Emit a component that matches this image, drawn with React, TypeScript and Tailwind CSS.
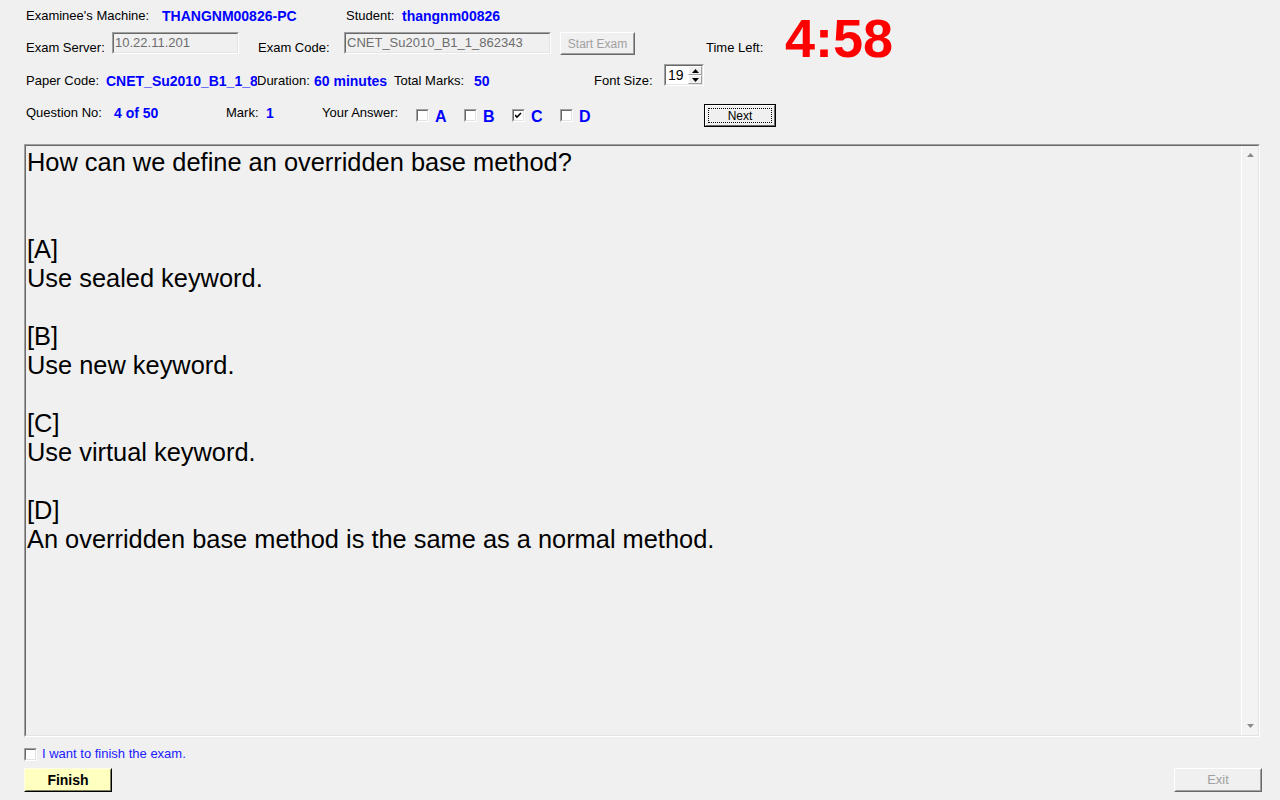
import { ReactNode } from 'react'

function Label({ w, className = '', children }: { w?: string; className?: string; children: ReactNode }) {
  return <span className={`text-[13px] leading-4 text-black whitespace-nowrap ${w ?? ''} ${className}`}>{children}</span>
}

function Value({ w, className = '', children }: { w?: string; className?: string; children: ReactNode }) {
  return (
    <span className={`text-[14px] leading-4 font-bold text-[#0000ff] whitespace-nowrap ${w ?? ''} ${className}`}>
      {children}
    </span>
  )
}

function TextBox({ w, value }: { w: string; value: string }) {
  return (
    <div className={`${w} h-[22px] border border-[#a0a0a0] border-b-white border-r-white`}>
      <div className="h-full border border-[#696969] border-b-[#e3e3e3] border-r-[#e3e3e3] bg-[#f0f0f0] pl-[1px] text-[13px] leading-[17px] text-[#6d6d6d] whitespace-nowrap overflow-hidden">
        {value}
      </div>
    </div>
  )
}

function CheckBox({ checked = false, className = '' }: { checked?: boolean; className?: string }) {
  return (
    <div className={`w-[13px] h-[13px] shrink-0 border border-[#a0a0a0] border-b-white border-r-white ${className}`}>
      <div className="w-full h-full border border-[#696969] border-b-[#e3e3e3] border-r-[#e3e3e3] bg-white flex items-center justify-center">
        {checked && (
          <svg width="7" height="7" viewBox="0 0 7 7">
            <path d="M0 3 L2 5 L6 1" stroke="black" strokeWidth="1.6" fill="none" />
          </svg>
        )}
      </div>
    </div>
  )
}

function Arrow({ up, color = '#606060' }: { up?: boolean; color?: string }) {
  return (
    <svg width="7" height="4" viewBox="0 0 7 4">
      <path d={up ? 'M0 4 L3.5 0 L7 4 Z' : 'M0 0 L3.5 4 L7 0 Z'} fill={color} />
    </svg>
  )
}

function Answer({ letter, checked }: { letter: string; checked?: boolean }) {
  return (
    <div className="flex w-[48px] items-start">
      <CheckBox checked={checked} className="mt-[5px]" />
      <span className="ml-[6px] mt-[4px] text-[16px] leading-[18px] font-bold text-[#0000ff]">{letter}</span>
    </div>
  )
}

const question = `How can we define an overridden base method?


[A]
Use sealed keyword.

[B]
Use new keyword.

[C]
Use virtual keyword.

[D]
An overridden base method is the same as a normal method.`

export default function App() {
  return (
    <div className="w-[1280px] h-[800px] bg-[#f0f0f0] flex flex-col font-['Liberation_Sans',Arial,sans-serif] overflow-hidden">
      {/* top block: machine info + timer */}
      <div className="flex h-[55px] items-start">
        <div className="w-[706px] flex flex-col">
          <div className="flex h-4 mt-2 pl-[26px]">
            <Label w="w-[136px]">Examinee's Machine:</Label>
            <Value w="w-[184px]">THANGNM00826-PC</Value>
            <Label w="w-[56px]">Student:</Label>
            <Value>thangnm00826</Value>
          </div>
          <div className="flex h-[23px] mt-2 pl-[26px] items-start">
            <Label w="w-[86px]" className="mt-[8px]">Exam Server:</Label>
            <TextBox w="w-[127px]" value="10.22.11.201" />
            <Label w="w-[86px]" className="mt-[8px] ml-[19px]">Exam Code:</Label>
            <TextBox w="w-[207px]" value="CNET_Su2010_B1_1_862343" />
            <div className="ml-[9px] w-[75px] h-[23px] border border-white border-b-[#696969] border-r-[#696969]">
              <div className="h-full border border-transparent border-b-[#a0a0a0] border-r-[#a0a0a0] flex items-center justify-center text-[12px] text-[#a0a0a0]">
                Start Exam
              </div>
            </div>
          </div>
        </div>
        <Label w="w-[79px]" className="mt-[40px]">Time Left:</Label>
        <span className="mt-[11px] text-[54px] leading-[54px] font-bold text-[#ff0000]">4:58</span>
      </div>

      {/* paper row */}
      <div className="flex h-[22px] mt-[9px] pl-[26px] items-start">
        <Label w="w-[80px]" className="mt-[9px]">Paper Code:</Label>
        <Value w="w-[151px]" className="mt-[9px] overflow-hidden">CNET_Su2010_B1_1_862343</Value>
        <Label w="w-[57px]" className="mt-[9px]">Duration:</Label>
        <Value w="w-[80px]" className="mt-[9px]">60 minutes</Value>
        <Label w="w-[80px]" className="mt-[9px]">Total Marks:</Label>
        <Value w="w-[120px]" className="mt-[9px]">50</Value>
        <Label w="w-[70px]" className="mt-[9px]">Font Size:</Label>
        <div className="w-[40px] h-[22px] border border-[#a0a0a0] border-b-white border-r-white">
          <div className="h-full flex border border-[#696969] border-b-[#e3e3e3] border-r-[#e3e3e3] bg-white">
            <span className="flex-1 pl-[2px] text-[14px] leading-[18px] text-black">19</span>
            <div className="w-[14px] flex flex-col">
              <div className="flex-1 flex items-center justify-center bg-[#f0f0f0] border border-white border-b-[#a0a0a0] border-r-[#a0a0a0]">
                <Arrow up color="#000" />
              </div>
              <div className="flex-1 flex items-center justify-center bg-[#f0f0f0] border border-white border-b-[#a0a0a0] border-r-[#a0a0a0]">
                <Arrow color="#000" />
              </div>
            </div>
          </div>
        </div>
      </div>

      {/* question row */}
      <div className="flex h-[23px] mt-[18px] pl-[26px] items-start">
        <Label w="w-[88px]" className="mt-[1px]">Question No:</Label>
        <Value w="w-[112px]" className="mt-[1px]">4 of 50</Value>
        <Label w="w-[40px]" className="mt-[1px]">Mark:</Label>
        <Value w="w-[56px]" className="mt-[1px]">1</Value>
        <Label w="w-[94px]" className="mt-[1px]">Your Answer:</Label>
        <Answer letter="A" />
        <Answer letter="B" />
        <Answer letter="C" checked />
        <Answer letter="D" />
        <div className="ml-[96px] w-[72px] h-[23px] border border-black">
          <div className="h-full border border-white border-b-[#696969] border-r-[#696969] bg-[#f0f0f0] p-[2px]">
            <div className="h-full border border-dotted border-black flex items-center justify-center text-[12px] text-black">
              Next
            </div>
          </div>
        </div>
      </div>

      {/* question text box */}
      <div className="mt-[17px] ml-[24px] mr-[20px] h-[593px] border border-[#a0a0a0] border-b-white border-r-white">
        <div className="h-full flex border border-[#696969] border-b-[#e3e3e3] border-r-[#e3e3e3]">
          <div className="flex-1 pt-[2px] pl-[1px] text-[25.4px] leading-[29px] text-black whitespace-pre-line">{question}</div>
          <div className="w-[17px] flex flex-col justify-between items-center border-l border-white bg-[#f3f3f3] py-[7px]">
            <Arrow up color="#8a8a8a" />
            <Arrow color="#8a8a8a" />
          </div>
        </div>
      </div>

      {/* finish */}
      <div className="flex items-center mt-[9px] pl-[24px]">
        <CheckBox />
        <span className="ml-[5px] text-[13px] leading-4 text-[#2020ff]">I want to finish the exam.</span>
      </div>
      <div className="flex justify-between mt-[6px] pl-[24px] pr-[18px]">
        <div className="w-[88px] h-[24px] border border-[#ffffe8] border-b-black border-r-black bg-[#ffffc0]">
          <div className="h-full border border-transparent border-b-[#808060] border-r-[#808060] flex items-center justify-center text-[14px] font-bold text-black">
            Finish
          </div>
        </div>
        <div className="w-[88px] h-[24px] border border-white border-b-[#696969] border-r-[#696969]">
          <div className="h-full border border-transparent border-b-[#a0a0a0] border-r-[#a0a0a0] flex items-center justify-center text-[13px] text-[#a0a0a0]">
            Exit
          </div>
        </div>
      </div>
    </div>
  )
}
